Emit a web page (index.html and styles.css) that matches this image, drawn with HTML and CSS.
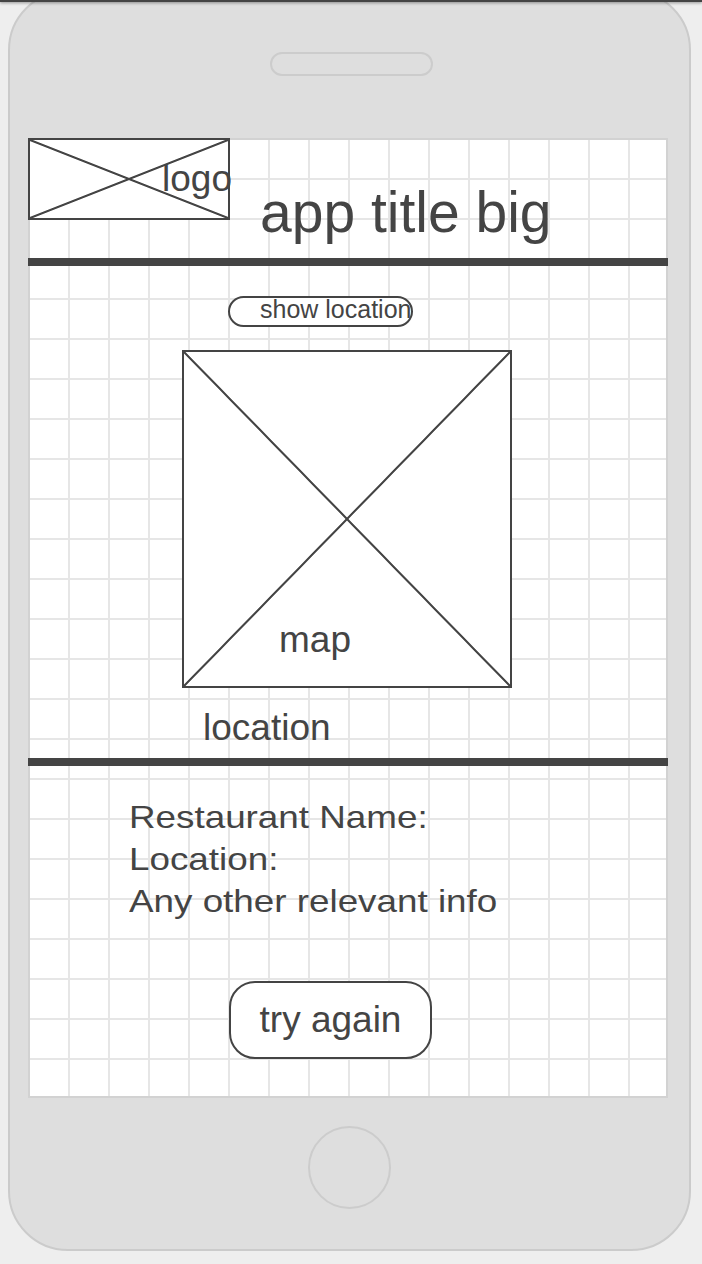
FILE: index.html
```html
<!DOCTYPE html>
<html lang="en">
<head>
  <meta charset="UTF-8" />
  <meta name="viewport" content="width=device-width, initial-scale=1.0" />
  <title>Restaurant Finder - wireframe</title>
  <link rel="stylesheet" href="styles.css">
</head>
<body>
  <div class="topbar"></div>

  <div class="phone">
    <div class="speaker"></div>

    <div class="screen">
      <header class="header">
        <div class="placeholder logo"><span class="logo-label">logo</span></div>
        <h1 class="app-title">app title big</h1>
      </header>

      <div class="divider"></div>

      <section class="map-section">
        <div class="pill-btn">show location</div>
        <div class="placeholder map"><span class="map-label">map</span></div>
        <p class="location-label">location</p>
      </section>

      <div class="divider"></div>

      <section class="result">
        <div class="info">
          <p>Restaurant Name:</p>
          <p>Location:</p>
          <p>Any other relevant info</p>
        </div>
        <div class="round-btn">try again</div>
      </section>
    </div>

    <div class="home-btn"></div>
  </div>
</body>
</html>
```

FILE: styles.css
```css
body {
  margin: 0;
  background: #eeeeee;
  font-family: 'Liberation Sans', Arial, sans-serif;
  color: #444;
  overflow: hidden;
}

p, h1 {
  margin: 0;
  font-weight: normal;
}

.topbar {
  position: fixed;
  top: 0;
  left: 0;
  right: 0;
  height: 2px;
  background: #444;
  box-shadow: 0 1px 3px rgba(0, 0, 0, 0.45);
  z-index: 5;
}

.phone {
  box-sizing: border-box;
  width: 683px;
  height: 1261px;
  margin: -10px 0 0 8px;
  padding-top: 60px;
  background: #dedede;
  border: 2px solid #cbcbcb;
  border-radius: 60px;
  display: flex;
  flex-direction: column;
  align-items: center;
}

.speaker {
  box-sizing: border-box;
  width: 163px;
  height: 24px;
  margin-left: 4px;
  border: 2px solid #cccccc;
  border-radius: 12px;
}

.home-btn {
  box-sizing: border-box;
  width: 83px;
  height: 83px;
  margin-top: 28px;
  border: 2px solid #cccccc;
  border-radius: 50%;
}

/* the white screen with its 40px wireframe grid */
.screen {
  align-self: flex-start;
  margin: 62px 0 0 18px;
  width: 640px;
  height: 960px;
  display: flex;
  flex-direction: column;
  background-color: #fff;
  background-image:
    linear-gradient(#e6e6e6 2px, transparent 2px),
    linear-gradient(90deg, #e6e6e6 2px, transparent 2px);
  background-size: 40px 40px;
  background-position: 0 0;
  box-shadow: inset 0 0 0 2px #d2d2d2;
}

.placeholder {
  box-sizing: border-box;
  border: 2px solid #444;
  background:
    linear-gradient(to top right, transparent calc(50% - 1.5px), #444 calc(50% - 0.6px), #444 calc(50% + 0.6px), transparent calc(50% + 1.5px)),
    linear-gradient(to bottom right, transparent calc(50% - 1.5px), #444 calc(50% - 0.6px), #444 calc(50% + 0.6px), transparent calc(50% + 1.5px)),
    #fff;
}

.header {
  height: 120px;
  display: flex;
  align-items: flex-start;
}

.logo {
  width: 202px;
  height: 82px;
  padding-top: 18px;
  display: flex;
  justify-content: flex-end;
}

.logo-label {
  font-size: 37px;
  line-height: 42px;
  margin-right: -4px;
}

.app-title {
  margin: 42px 0 0 30px;
  font-size: 57px;
  line-height: 65px;
}

.divider {
  height: 8px;
  background: #444;
}

.map-section {
  box-sizing: border-box;
  height: 492px;
  padding-top: 30px;
}

.pill-btn {
  box-sizing: border-box;
  width: 185px;
  height: 31px;
  margin-left: 200px;
  padding-left: 30px;
  border: 2px solid #444;
  border-radius: 16px;
  background: #fff;
  font-size: 25px;
  line-height: 22px;
  white-space: nowrap;
}

.map {
  width: 330px;
  height: 338px;
  margin: 23px 0 0 154px;
  padding: 267px 0 0 95px;
}

.map-label {
  font-size: 37px;
  line-height: 42px;
}

.location-label {
  margin: 19px 0 0 175px;
  font-size: 37px;
  line-height: 42px;
}

.result {
  flex: 1;
  padding-top: 30px;
}

.info {
  width: max-content;
  margin-left: 101px;
  font-size: 32px;
  line-height: 42px;
  transform: scaleX(1.15);
  transform-origin: left top;
}

.round-btn {
  box-sizing: border-box;
  width: 203px;
  height: 78px;
  margin: 59px 0 0 201px;
  border: 2px solid #444;
  border-radius: 26px;
  background: #fff;
  font-size: 37px;
  line-height: 74px;
  text-align: center;
}
```
